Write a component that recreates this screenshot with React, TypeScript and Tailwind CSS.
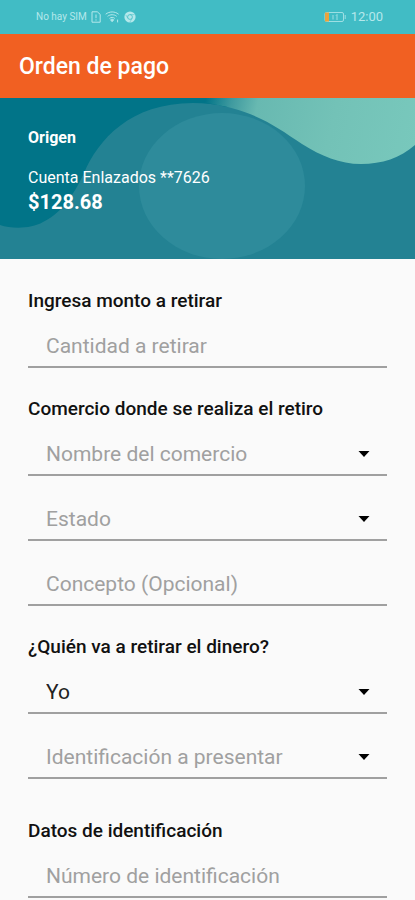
import { useState } from 'react';

type FieldProps = {
  id: string;
  label: string;
};

type SelectFieldProps = FieldProps & {
  options: string[];
  initial?: string;
};

const COMERCIOS = ['Farmacia', 'Supermercado', 'Tienda de conveniencia'];
const ESTADOS = ['Ciudad de México', 'Jalisco', 'Nuevo León'];
const PERSONAS = ['Yo', 'Otra persona'];
const IDENTIFICACIONES = ['INE', 'Pasaporte', 'Licencia'];

function StatusBar() {
  return (
    <div className="flex h-[34px] items-center justify-between bg-[#41bcc5] pl-9 pr-8 text-[#b5e8eb]">
      <div className="flex items-center gap-1">
        <span className="text-[10px] leading-4">No hay SIM</span>
        <svg className="h-3 w-[10px]" viewBox="0 0 10 12" fill="none" stroke="currentColor" aria-hidden="true">
          <path d="M1 .8h5.3L9.2 3.4v7.8H1z" />
          <path d="M5 3.5v3.7M5 8.4v1.2" />
        </svg>
        <svg className="h-3 w-[15px]" viewBox="0 0 15 12" fill="none" stroke="currentColor" aria-hidden="true">
          <path d="M.7 3.2C4.5.2 9.8.2 13.6 3.2M2.6 5.3c2.7-2.1 6.4-2.1 9.1 0M4.5 7.4c1.6-1.3 3.7-1.3 5.3 0" />
          <path d="M5.6 8.8c1-.8 2.2-.8 3.1 0L7.1 10.7z" fill="currentColor" />
          <path d="M12.6 8.6v2.8" />
        </svg>
        <svg className="h-3 w-3" viewBox="0 0 12 12" fill="none" aria-hidden="true">
          <circle cx="6" cy="6" r="5.6" fill="currentColor" />
          <circle cx="6" cy="6" r="2.4" stroke="#41bcc5" strokeWidth=".8" />
          <path d="M6 3.6h4.6M3.9 7.3 1.7 3.8M8.1 7.3l-2.2 3.8" stroke="#41bcc5" strokeWidth=".5" />
        </svg>
      </div>
      <div className="flex items-center gap-1">
        <svg className="h-3 w-[23px]" viewBox="0 0 23 12" fill="none" stroke="currentColor" strokeWidth=".8" aria-hidden="true">
          <rect x="1" y="1.5" width="18.5" height="9" rx="1.5" />
          <path d="M21.2 4v4M9 4v4.5M13 3.5v5.5M12 4.5l1-1" />
          <path d="M1 1.5h4v9H1z" fill="#e8a33d" stroke="none" />
        </svg>
        <span className="text-[13px] leading-4">12:00</span>
      </div>
    </div>
  );
}

function Waves() {
  return (
    <svg
      className="absolute inset-0 h-full w-full"
      viewBox="0 0 415 161"
      preserveAspectRatio="none"
      aria-hidden="true"
    >
      <defs>
        <linearGradient id="mint" gradientUnits="userSpaceOnUse" x1="206" y1="0" x2="415" y2="50">
          <stop offset="0" stopColor="#017488" />
          <stop offset=".12" stopColor="#3f9a9f" />
          <stop offset=".24" stopColor="#68b9b1" />
          <stop offset=".6" stopColor="#73c2b7" />
          <stop offset="1" stopColor="#78c8bc" />
        </linearGradient>
      </defs>
      <path
        d="M0 127C12 131 31 131 43 124C64 114 76 92 84 75C98 42 130 5 193 5C205 5 216 6 226 9L260 4H415V161H0Z"
        fill="#238293"
      />
      <path d="M205 0H415V47C400 60 382 66 361 66C340 66 321 58 302 46C274 27 252 11 205 5Z" fill="url(#mint)" />
      <ellipse cx="222" cy="88" rx="83" ry="73" fill="#2e8b9b" />
    </svg>
  );
}

function SectionTitle({ children }: { children: string }) {
  return <h2 className="text-[19px] leading-6 font-medium text-[#111]">{children}</h2>;
}

function TextField({ id, label }: FieldProps) {
  return (
    <input
      id={id}
      type="text"
      aria-label={label}
      placeholder={label}
      className="block h-11 w-full border-b-2 border-[#a0a0a0] bg-transparent px-[18px] pt-0.5 text-[21px] text-[#222] outline-none placeholder:text-[#a0a0a0]"
    />
  );
}

function SelectField({ id, label, options, initial = '' }: SelectFieldProps) {
  const [value, setValue] = useState(initial);

  return (
    <div className="relative">
      <select
        id={id}
        aria-label={label}
        value={value}
        onChange={(e) => setValue(e.target.value)}
        className={`block h-11 w-full appearance-none border-b-2 border-[#a0a0a0] bg-transparent px-[18px] pt-1 text-[21px] outline-none ${
          value ? 'text-[#222]' : 'text-[#a0a0a0]'
        }`}
      >
        <option value="" disabled>{label}</option>
        {options.map((option) => (
          <option key={option} value={option}>{option}</option>
        ))}
      </select>
      <svg
        className="pointer-events-none absolute top-[19px] right-[17px] h-[6px] w-3"
        viewBox="0 0 12 6"
        aria-hidden="true"
      >
        <path d="M.5 0h11L6 6z" fill="#000" />
      </svg>
    </div>
  );
}

export default function App() {
  return (
    <main className="min-h-screen bg-[#fafafa] font-['Roboto',sans-serif]">
      <StatusBar />

      <header className="flex h-16 items-center bg-[#f16022] px-[19px] pt-0.5">
        <h1 className="text-[23px] leading-8 font-medium text-white">Orden de pago</h1>
      </header>

      {/* Cuenta de origen */}
      <section className="relative h-[161px] bg-[#017488] text-white">
        <Waves />
        <div className="relative px-7 pt-7">
          <h2 className="text-base leading-6 font-bold">Origen</h2>
          <p className="mt-4 text-base leading-6">Cuenta Enlazados **7626</p>
          <p className="text-xl leading-6 font-bold">$128.68</p>
        </div>
      </section>

      <form className="px-7 pt-[30px]">
        <section>
          <SectionTitle>Ingresa monto a retirar</SectionTitle>
          <div className="mt-[11px]">
            <TextField id="monto" label="Cantidad a retirar" />
          </div>
        </section>

        <section className="mt-[29px]">
          <SectionTitle>Comercio donde se realiza el retiro</SectionTitle>
          <div className="mt-[11px] space-y-[21px]">
            <SelectField id="comercio" label="Nombre del comercio" options={COMERCIOS} />
            <SelectField id="estado" label="Estado" options={ESTADOS} />
            <TextField id="concepto" label="Concepto (Opcional)" />
          </div>
        </section>

        <section className="mt-[29px]">
          <SectionTitle>¿Quién va a retirar el dinero?</SectionTitle>
          <div className="mt-[11px] space-y-[21px]">
            <SelectField id="persona" label="Persona" options={PERSONAS} initial="Yo" />
            <SelectField id="identificacion" label="Identificación a presentar" options={IDENTIFICACIONES} />
          </div>
        </section>

        <section className="mt-10">
          <SectionTitle>Datos de identificación</SectionTitle>
          <div className="mt-[11px]">
            <TextField id="numero" label="Número de identificación" />
          </div>
        </section>
      </form>
    </main>
  );
}
